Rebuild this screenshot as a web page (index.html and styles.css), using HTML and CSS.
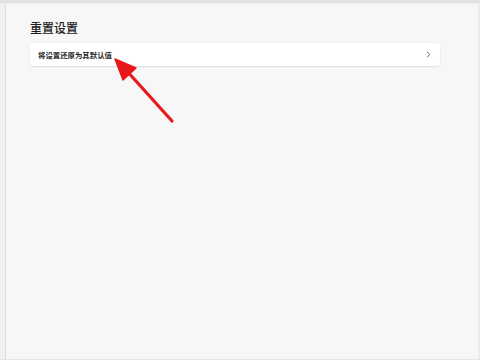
FILE: index.html
```html
<!DOCTYPE html>
<html lang="zh-CN">
<head>
<meta charset="utf-8">
<link rel="stylesheet" href="styles.css">
</head>
<body>
<div class="topbar"></div>
<div class="main">
  <div class="leftstrip"></div>
  <div class="content">
    <h2 class="heading">重置设置</h2>
    <div class="card">
      <span class="card-text">将设置还原为其默认值</span>
      <svg class="chev" width="5" height="7" viewBox="0 0 5 7"><path d="M1 0.8 L3.8 3.5 L1 6.2" fill="none" stroke="#707070" stroke-width="1"/></svg>
    </div>
  </div>
</div>
<svg class="arrow" width="480" height="360" viewBox="0 0 480 360">
  <line x1="172" y1="121" x2="126" y2="70" stroke="#e8191a" stroke-width="3.2" stroke-linecap="round"/>
  <polygon points="115,59 136,68 123,80" fill="#e8191a" stroke="#e8191a" stroke-width="1.5" stroke-linejoin="round"/>
</svg>
</body>
</html>
```
FILE: styles.css
```css
html, body {
  margin: 0;
  padding: 0;
  width: 480px;
  height: 360px;
  overflow: hidden;
  background: #f7f7f7;
  font-family: "Noto Sans CJK SC", "Noto Sans", sans-serif;
}
.topbar {
  height: 3px;
  background: #e2e2e2;
  border-bottom: 1px solid #ececec;
}
.main {
  display: flex;
  height: 355px;
  border-bottom: 1px solid #e6e6e6;
}
.leftstrip {
  width: 5px;
  background: #f1f1f1;
  border-right: 1px solid #dedede;
}
.content {
  flex: 1;
  padding: 16px 0 0 24px;
  border-right: 2px solid #ececec;
}
.heading {
  margin: 0 0 7px 0;
  font-size: 12px;
  line-height: 16px;
  height: 16px;
  font-weight: 500;
  color: #1b1b1b;
}
.card {
  width: 394px;
  height: 23px;
  padding: 0 8px;
  background: #ffffff;
  border-radius: 3px;
  box-shadow: 0 1px 1px rgba(0,0,0,0.08), 0 0 0 0.5px rgba(0,0,0,0.04);
  display: flex;
  align-items: center;
  justify-content: space-between;
}
.card-text {
  font-size: 7.4px;
  font-weight: 700;
  color: #262626;
}
.chev {
  margin-right: 1px;
}
.arrow {
  position: absolute;
  left: 0;
  top: 0;
}
```
